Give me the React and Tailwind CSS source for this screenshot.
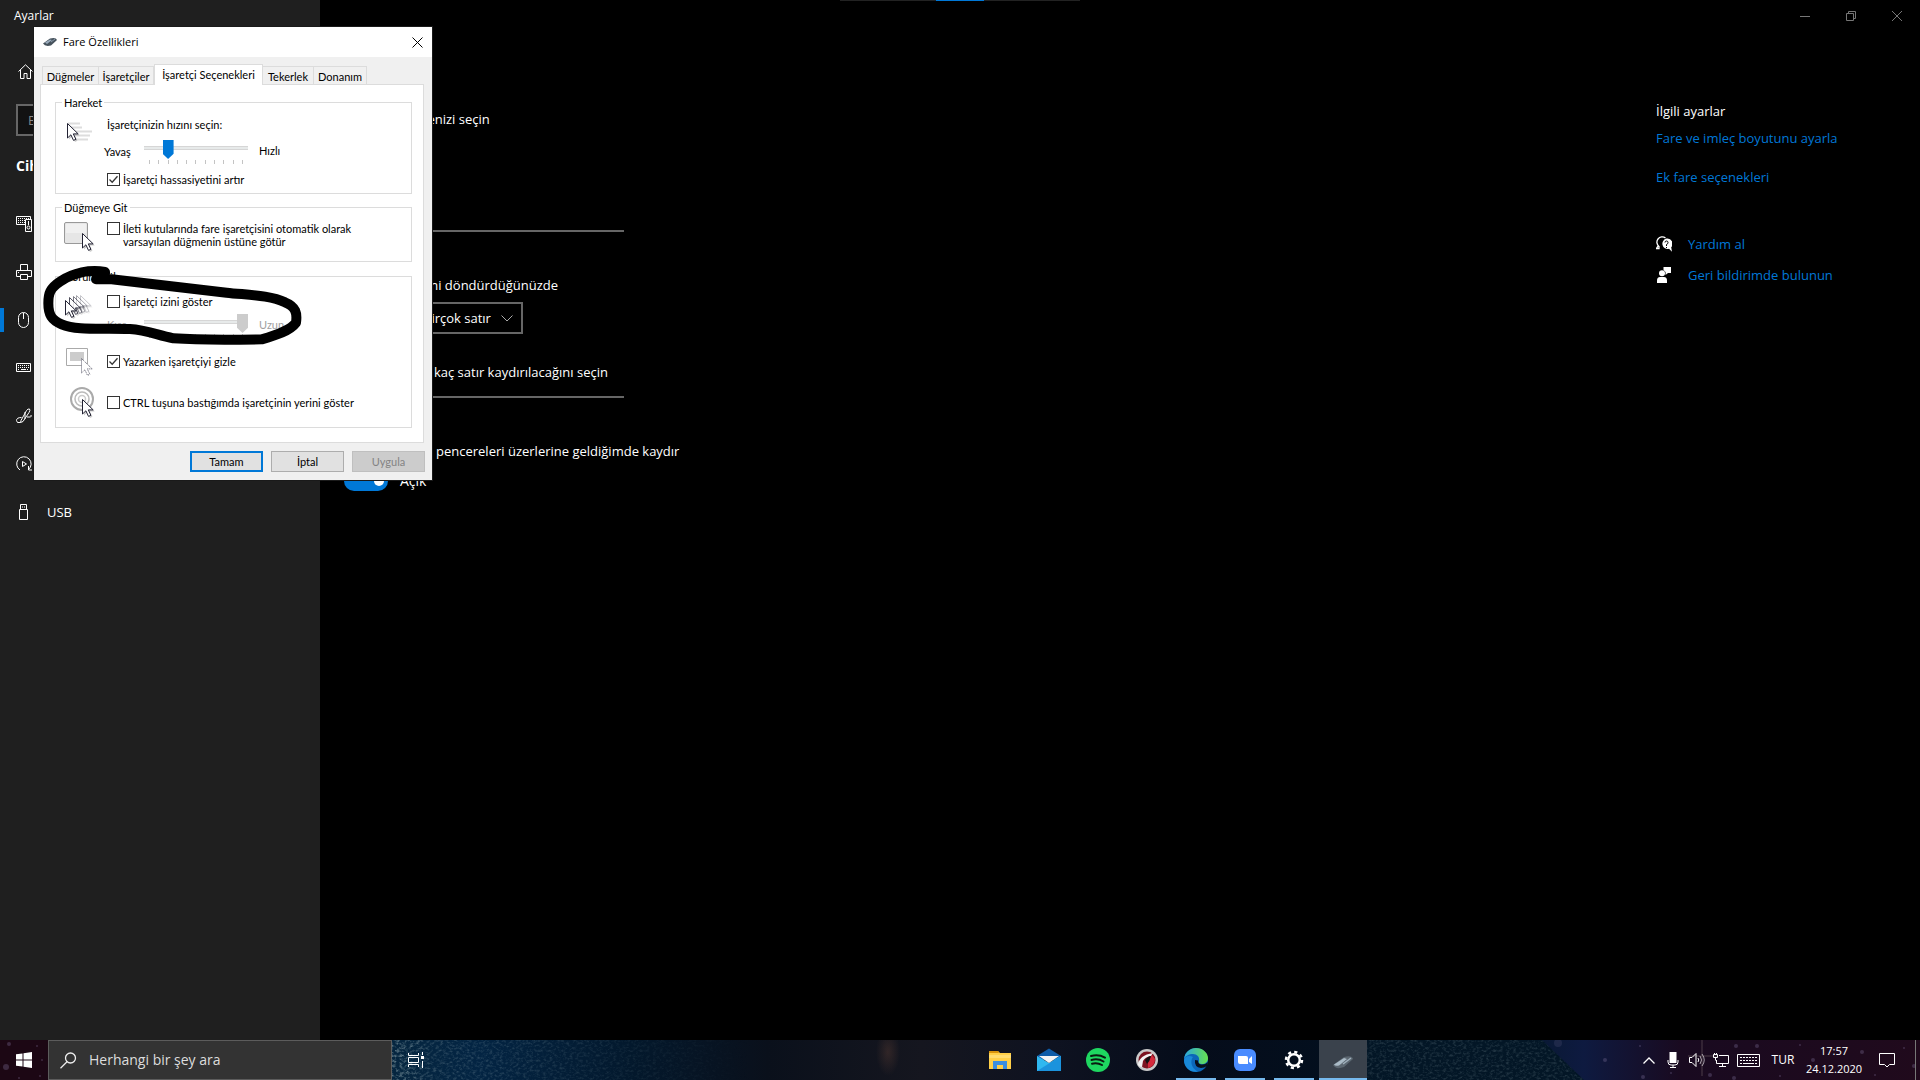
import React from 'react';

const CURSOR = "M.5.5v14.5l3.4-3.2 2.6 5.6 2.4-1.1-2.6-5.4h4.9z";

const Glyph = ({ children, className = "w-4 h-4" }) => (
    <svg viewBox="0 0 16 16" className={`shrink-0 ${className}`} fill="none" stroke="currentColor" strokeWidth="1" aria-hidden="true">
        {children}
    </svg>
);

const navItems = [
    {
        name: "Bluetooth ve diğer cihazlar",
        icon: (
            <>
                <path d="M9 8.5H.5v-8h14V3" />
                <path d="M2 2.5h11M2 4.5h7M2 6.5h7" strokeDasharray="1 1" />
                <path d="M9.500 3.500h6v12h-6z" />
                <circle cx="12.500" cy="11.500" r="1.500" />
                <path d="M12 6h1M12 8h1" strokeWidth="2" />
            </>
        ),
    },
    {
        name: "Yazıcılar ve tarayıcılar",
        icon: (
            <>
                <path d="M4.500 6.500v-6h7v6M4.500 12.500h-4v-6h15v6h-4" />
                <path d="M4.500 10.500h7v5h-7zM2 8.500h1" />
            </>
        ),
    },
    {
        name: "Fare",
        active: true,
        icon: <path d="M2.500 5.500a5 5 0 0 1 10 0v5a5 5 0 0 1-10 0zM7.500 1v6" />,
    },
    {
        name: "Yazma",
        icon: (
            <>
                <path d="M.5 3.500h14v8H.5z" />
                <path d="M2 5.500h11M2 7.500h11M2 9.500h2M11 9.500h2" strokeDasharray="1 1" />
                <path d="M5 9.500h5" />
            </>
        ),
    },
    {
        name: "Kalem ve Windows Ink",
        icon: (
            <>
                <path d="M5 12.500 10.500 2.500q1.500-2 3-1.500 1 1-.5 3.500L7 13.500l-2.500 1z" />
                <path d="M5.500 9.500Q.5 9.500.5 12.500t4 2M11 9h3.500q1-.5.5-2M9 4v7" />
            </>
        ),
    },
    {
        name: "Otomatik Kullan",
        icon: (
            <>
                <path d="M4 14A7.200 7.200 0 1 1 12.500 13.500M12.500 10v4h3.500" />
                <path d="M6.500 5.500v5l4-2.500z" />
            </>
        ),
    },
    {
        name: "USB",
        label: "USB",
        icon: (
            <>
                <path d="M3.500 5.500h8v10h-8zM4.500 5.500v-5h6v5" />
                <path d="M6 3h1M8 3h1" />
            </>
        ),
    },
];

const lineRange = "block w-[280px] h-5 appearance-none bg-transparent [&::-webkit-slider-runnable-track]:h-[2px] [&::-webkit-slider-runnable-track]:bg-[#666] [&::-webkit-slider-thumb]:appearance-none [&::-webkit-slider-thumb]:w-2 [&::-webkit-slider-thumb]:h-5 [&::-webkit-slider-thumb]:-mt-[9px] [&::-webkit-slider-thumb]:rounded [&::-webkit-slider-thumb]:bg-[#0078d7]";

const dialogRange = "block w-[104px] h-[19px] appearance-none bg-transparent [&::-webkit-slider-runnable-track]:h-[19px] [&::-webkit-slider-runnable-track]:bg-[linear-gradient(transparent_6px,#d6d6d6_6px,#d6d6d6_7px,#e7eaea_7px,#e7eaea_9px,#d6d6d6_9px,#d6d6d6_10px,transparent_10px)] [&::-webkit-slider-thumb]:appearance-none [&::-webkit-slider-thumb]:w-[11px] [&::-webkit-slider-thumb]:h-[19px] [&::-webkit-slider-thumb]:bg-[#0078d7] [&::-webkit-slider-thumb]:[clip-path:polygon(0_0,100%_0,100%_72%,50%_100%,0_72%)] disabled:[&::-webkit-slider-thumb]:bg-[#ccc]";

const Sidebar = () => (
    <aside className="w-80 shrink-0 bg-[#1f1f1f] text-white">
        <div className="h-8 pl-[14px] pt-2 text-xs leading-4">Ayarlar</div>
        <a href="#home" aria-label="Giriş" className="flex items-center h-10 mt-5 pl-[18px]">
            <Glyph>
                <path d="M.5 7.500 7.500.8l7 6.700M2.500 6v8.500h3.500v-5h3v5h3.500V6" />
            </Glyph>
        </a>
        <input
            type="text"
            aria-label="Bir ayar bulun"
            placeholder="Bir ayar"
            className="block w-[288px] h-8 mx-4 mt-3 px-[10px] border-2 border-[#666] bg-black/40 placeholder:text-[#888]"
        />
        <h2 className="mt-5 mb-6 pl-4 h-5 text-sm leading-5 font-bold">Cihazlar</h2>
        <nav>
            {navItems.map((item) => (
                <a key={item.name} href="#nav" aria-label={item.name} className="flex items-center h-12">
                    <span className={`w-1 h-6 mr-3 ${item.active ? "bg-[#0078d7]" : ""}`}></span>
                    <Glyph>{item.icon}</Glyph>
                    {item.label && <span className="ml-[15px]">{item.label}</span>}
                </a>
            ))}
        </nav>
    </aside>
);

const WindowControls = () => (
    <header className="flex justify-end h-8 text-[#777]">
        <button aria-label="Simge durumuna küçült" className="w-[46px] grid place-items-center">
            <svg className="w-[10px] h-[10px]" viewBox="0 0 10 10" stroke="currentColor"><path d="M0 5.500h10" /></svg>
        </button>
        <button aria-label="Önceki boyut" className="w-[46px] grid place-items-center">
            <svg className="w-[10px] h-[10px]" viewBox="0 0 10 10" fill="none" stroke="currentColor"><path d="M.5 2.500h7v7h-7zM2.500 2.500v-2h7v7h-2" /></svg>
        </button>
        <button aria-label="Kapat" className="w-[46px] grid place-items-center">
            <svg className="w-[10px] h-[10px]" viewBox="0 0 10 10" stroke="currentColor"><path d="m0 0 10 10M10 0 0 10" /></svg>
        </button>
    </header>
);

const MouseSettings = () => (
    <div className="pl-6 pt-[77px]">
        <label htmlFor="primary" className="block pl-1">Birincil düğmenizi seçin</label>
        <select id="primary" className="block w-20 h-8 mt-2 px-2 appearance-none border-2 border-[#666] bg-black">
            <option>Sol</option>
        </select>
        <label htmlFor="speed" className="block pl-1 mt-[26px] mb-[6px]">İmleç hızı</label>
        <input id="speed" type="range" min="0" max="20" defaultValue="3" className={lineRange} />

        <label htmlFor="wheel" className="block pl-1 mt-[34px] mb-[7px]">Fare tekerleğini döndürdüğünüzde</label>
        <div className="grid w-[179px]">
            <select id="wheel" className="[grid-area:1/1] h-8 pl-2 appearance-none border-2 border-[#666] bg-black">
                <option>Bir seferde birçok satır</option>
            </select>
            <svg viewBox="0 0 12 7" className="[grid-area:1/1] w-3 h-[7px] mr-[10px] self-center justify-self-end pointer-events-none" fill="none" stroke="#aaa">
                <path d="m.5.5 5.500 5.500L11.500.5" />
            </svg>
        </div>

        <label htmlFor="lines" className="block pl-1 mt-7 mb-[5px]">Her seferinde kaç satır kaydırılacağını seçin</label>
        <input id="lines" type="range" min="1" max="100" defaultValue="3" className={lineRange} />

        <label htmlFor="inactive" className="block mt-[34px] pl-[92px]">pencereleri üzerlerine geldiğimde kaydır</label>
        <div className="flex items-center gap-3 mt-[10px]">
            <button id="inactive" role="switch" aria-checked="true" className="flex items-center justify-end w-[44px] h-5 pr-1 rounded-full bg-[#0078d7]">
                <span className="w-[10px] h-[10px] rounded-full bg-white"></span>
            </button>
            <span className="text-sm leading-5">Açık</span>
        </div>
    </div>
);

const RelatedSettings = () => (
    <section className="w-[264px] shrink-0 pt-[69px] text-[#0078d7]">
        <h2 className="text-white mb-[7px]">İlgili ayarlar</h2>
        <a href="#cursor" className="block mb-[19px]">Fare ve imleç boyutunu ayarla</a>
        <a href="#more" className="block mb-[47px]">Ek fare seçenekleri</a>
        <a href="#help" className="flex items-center gap-4 mb-[11px]">
            <Glyph className="w-4 h-4 text-white">
                <path d="M3 10.500A5 5 0 1 1 9.500 2M3 10v2.500H.5L2 10" strokeWidth="1.300" />
                <path d="M10.500 2.500a5.300 5.300 0 1 0 2.500 10.300l3 3-.8-4.500A5.300 5.300 0 0 0 10.500 2.500z" fill="currentColor" stroke="none" />
                <path d="M9 6.500q0-1.500 1.500-1.500T12 6.500t-1.500 2V10M10.500 11v1" stroke="#000" />
            </Glyph>
            Yardım al
        </a>
        <a href="#feedback" className="flex items-center gap-4">
            <Glyph className="w-4 h-4 text-white">
                <g fill="currentColor" stroke="none">
                    <path d="M7.500 0h7.500v6H12L9.500 8V5L7.500 3z" />
                    <circle cx="6" cy="6.200" r="3" />
                    <path d="M1 16v-2.500Q1 10 4 10h4q3 0 3 3.500V16z" />
                </g>
            </Glyph>
            Geri bildirimde bulunun
        </a>
    </section>
);

const CheckBox = ({ id, label, checked }) => (
    <div className="flex items-start gap-[3px]">
        <span className="grid shrink-0">
            <input id={id} type="checkbox" defaultChecked={checked} className="peer [grid-area:1/1] w-[13px] h-[13px] appearance-none border border-[#333] bg-white" />
            <svg viewBox="0 0 13 13" className="[grid-area:1/1] w-[13px] h-[13px] hidden peer-checked:block pointer-events-none" fill="none" stroke="#333" strokeWidth="1.300">
                <path d="m2.500 6.500 2.700 2.700 5.300-6" />
            </svg>
        </span>
        <label htmlFor={id} className="whitespace-pre-line">{label}</label>
    </div>
);

const Ticks = () => (
    <div className="flex justify-between w-[94px] h-1 mx-[5px] mt-[1px]">
        {Array.from({ length: 11 }, (_, i) => (
            <span key={i} className="w-px bg-[#c4c4c4]"></span>
        ))}
    </div>
);

const Group = ({ title, className, children }) => (
    <fieldset className={`border border-[#dcdcdc] ${className}`}>
        <legend className="h-[13px] ml-[6px] px-[2px]">{title}</legend>
        {children}
    </fieldset>
);

const IconCell = ({ children }) => (
    <svg viewBox="0 0 48 34" className="w-[48px] h-[34px] shrink-0 -mb-2" fill="none" aria-hidden="true">
        {children}
    </svg>
);

const Cursor = ({ x, y, opacity = 1 }) => (
    <g transform={`translate(${x} ${y})`} opacity={opacity}>
        <path d={CURSOR} transform="translate(1.500 1.500)" fill="#999" opacity=".5" />
        <path d={CURSOR} fill="#fff" stroke="#223" />
    </g>
);

const tabs = [
    { label: "Düğmeler", width: "w-[57px]" },
    { label: "İşaretçiler", width: "w-[56px]" },
    { label: "İşaretçi Seçenekleri", width: "w-[109px]", active: true },
    { label: "Tekerlek", width: "w-[52px]" },
    { label: "Donanım", width: "w-[53px]" },
];

const MouseDialog = () => (
    <div role="dialog" aria-label="Fare Özellikleri" className="absolute left-[34px] top-[27px] w-[398px] bg-[#f0f0f0] text-black text-[11px] leading-[13px] font-['Lato','Liberation_Sans',sans-serif] shadow-[0_0_0_1px_#1a1a1a]">
        <div className="flex items-center h-[30px] pl-[9px] bg-white">
            <svg viewBox="0 0 15 10" className="w-[15px] h-[10px]">
                <path d="M0 6.500 7 1.500Q13 0 14 3L8 8.500Q2 10 0 6.500z" fill="#46525c" />
                <path d="M2 5.500 7 2.500l2 .5-5 4z" fill="#9ab" />
                <path d="m8 5 4-3" stroke="#89a" />
            </svg>
            <h2 className="flex-1 ml-[5px] pb-px text-[11px] font-['Open_Sans',sans-serif]">Fare Özellikleri</h2>
            <button aria-label="Kapat" className="grid place-items-center w-[30px] h-full">
                <svg viewBox="0 0 11 11" className="w-[11px] h-[11px]" stroke="#000"><path d="m.5.5 10 10M10.500.5l-10 10" /></svg>
            </button>
        </div>

        <div role="tablist" className="flex items-end h-[27px] pl-2">
            {tabs.map((tab) => (
                <button
                    key={tab.label}
                    role="tab"
                    aria-selected={!!tab.active}
                    className={`${tab.width} whitespace-nowrap border border-b-0 border-[#dcdcdc] ${tab.active ? "relative z-10 h-[21px] -mb-px pb-[2px] bg-white" : "h-[18px] pt-px -ml-px first:ml-0 last:w-[54px]"}`}
                >
                    {tab.label}
                </button>
            ))}
        </div>

        <div className="ml-[6px] mr-2 pt-[11px] pb-[14px] pl-[14px] pr-[11px] border border-[#dcdcdc] bg-white">
            <Group title="Hareket" className="pb-[7px]">
                <div className="flex pt-[9px]">
                    <IconCell>
                        <path d="M12 5.500h12M15 9.500h11M16 13.500h20M18 17.500h16M18 21.500h14" stroke="#ddd" strokeWidth="2" />
                        <Cursor x="11" y="5" />
                    </IconCell>
                    <div>
                        <label htmlFor="dlg-speed" className="block pl-[3px]">İşaretçinizin hızını seçin:</label>
                        <div className="flex mt-[9px]">
                            <span className="w-10 pt-[5px]">Yavaş</span>
                            <div>
                                <input id="dlg-speed" type="range" min="0" max="10" defaultValue="2" className={dialogRange} />
                                <Ticks />
                            </div>
                            <span className="pt-1 pl-[11px]">Hızlı</span>
                        </div>
                        <div className="pl-[3px] pt-[9px]">
                            <CheckBox id="precision" label="İşaretçi hassasiyetini artır" checked />
                        </div>
                    </div>
                </div>
            </Group>

            <Group title="Düğmeye Git" className="mt-[7px] pb-[13px]">
                <div className="flex pt-2">
                    <IconCell>
                        <rect x="8.500" y="0.500" width="23" height="21" rx="1.500" fill="#e6e6e6" stroke="#999" />
                        <path d="M10 2h20v9H10z" fill="#f0f0f0" />
                        <Cursor x="26" y="11" />
                    </IconCell>
                    <div className="pl-[3px]">
                        <CheckBox id="snap" label={"İleti kutularında fare işaretçisini otomatik olarak\nvarsayılan düğmenin üstüne götür"} />
                    </div>
                </div>
            </Group>

            <Group title="Görünürlük" className="mt-2 pb-2">
                <div className="flex h-[54px] mt-[10px]">
                    <IconCell>
                        <Cursor x="24" y="2" opacity=".25" />
                        <Cursor x="20" y="2" opacity=".4" />
                        <Cursor x="17" y="3" opacity=".6" />
                        <Cursor x="13" y="4" opacity=".8" />
                        <Cursor x="9" y="7" />
                    </IconCell>
                    <div className="pt-[2px]">
                        <div className="pl-[3px]">
                            <CheckBox id="trail" label="İşaretçi izini göster" />
                        </div>
                        <div className="flex mt-[6px] text-[#a0a0a0]">
                            <span className="w-10 pl-[3px] pt-1">Kısa</span>
                            <div>
                                <input type="range" aria-label="İz uzunluğu" min="0" max="10" defaultValue="10" disabled className={dialogRange} />
                                <Ticks />
                            </div>
                            <span className="pt-1 pl-[11px]">Uzun</span>
                        </div>
                    </div>
                </div>
                <div className="flex h-[39px]">
                    <IconCell>
                        <path d="M10.500 1.500h21v17h-21z" stroke="#aaa" fill="#fff" />
                        <path d="M14 5h14v9H14z" fill="#ccc" />
                        <path d={CURSOR} transform="translate(25 11)" fill="#fff" stroke="#556" strokeDasharray="1 1" />
                    </IconCell>
                    <div className="pl-[3px] pt-2">
                        <CheckBox id="hide" label="Yazarken işaretçiyi gizle" checked />
                    </div>
                </div>
                <div className="flex h-[33px]">
                    <IconCell>
                        <circle cx="26" cy="13" r="11" stroke="#aaa" strokeWidth="2" />
                        <circle cx="26" cy="13" r="7" stroke="#bbb" strokeWidth="1.500" />
                        <circle cx="26" cy="13" r="3.500" stroke="#ccc" strokeWidth="1.500" />
                        <Cursor x="26" y="13" />
                    </IconCell>
                    <div className="pl-[3px] pt-[10px]">
                        <CheckBox id="ctrl" label="CTRL tuşuna bastığımda işaretçinin yerini göster" />
                    </div>
                </div>
            </Group>
        </div>

        <div className="flex justify-end gap-2 pt-2 pb-2 pr-[7px]">
            <button className="w-[73px] h-[21px] border-2 border-[#0078d7] bg-[#e1e1e1]">Tamam</button>
            <button className="w-[73px] h-[21px] border border-[#adadad] bg-[#e1e1e1]">İptal</button>
            <button disabled className="w-[73px] h-[21px] border border-[#bfbfbf] bg-[#ccc] text-[#838383]">Uygula</button>
        </div>
    </div>
);

/* hand-drawn loop around the pointer trail option */
const Scribble = () => (
    <svg viewBox="0 0 810 270" className="absolute left-[40px] top-[260px] w-[270px] h-[90px] pointer-events-none" fill="none" stroke="#000" strokeWidth="30" strokeLinecap="round" strokeLinejoin="round">
        <path d="M195 36C150 28 100 38 60 65C30 85 25 100 25 130C25 165 35 180 65 193C110 212 180 204 270 207C320 210 350 225 400 235C470 240 560 240 665 238C710 225 750 212 768 188C772 160 768 140 735 127C690 105 620 105 560 98C450 85 330 72 215 58L168 58L195 38" />
    </svg>
);

const Wallpaper = () => (
    <svg className="absolute inset-0 w-full h-full" preserveAspectRatio="none" viewBox="0 0 1920 40" aria-hidden="true">
        <defs>
            <linearGradient id="sky">
                <stop offset="0" stopColor="#1c0714" />
                <stop offset=".04" stopColor="#1c0714" />
                <stop offset=".2" stopColor="#06263f" />
                <stop offset=".25" stopColor="#032443" />
                <stop offset=".33" stopColor="#03182c" />
                <stop offset=".4" stopColor="#0a101b" />
                <stop offset=".48" stopColor="#15161f" />
                <stop offset=".55" stopColor="#0e1220" />
                <stop offset=".62" stopColor="#050c1a" />
                <stop offset=".72" stopColor="#02101f" />
                <stop offset=".79" stopColor="#07182e" />
                <stop offset=".825" stopColor="#0e1a40" />
                <stop offset=".875" stopColor="#190a20" />
                <stop offset="1" stopColor="#200a1c" />
            </linearGradient>
            <linearGradient id="fade">
                <stop offset="0" stopColor="#fff" />
                <stop offset=".1" stopColor="#fff" stopOpacity=".4" />
                <stop offset="1" stopColor="#fff" stopOpacity="0" />
            </linearGradient>
            <radialGradient id="flare">
                <stop offset="0" stopColor="#6b4638" stopOpacity=".35" />
                <stop offset="1" stopColor="#6b4638" stopOpacity="0" />
            </radialGradient>
            <mask id="left"><rect x="392" width="360" height="40" fill="url(#fade)" /></mask>
            <clipPath id="ridge"><path d="M1367 0h175l42 40h-217z" /></clipPath>
            <filter id="grain" x="0" y="0" width="100%" height="100%">
                <feTurbulence type="fractalNoise" baseFrequency=".3 .4" numOctaves="3" />
                <feColorMatrix values="0 0 0 0 .32  0 0 0 0 .43  0 0 0 0 .46  0 2.500 0 0 -1.100" />
            </filter>
        </defs>
        <rect width="1920" height="40" fill="url(#sky)" />
        <g mask="url(#left)"><rect x="392" width="400" height="40" filter="url(#grain)" opacity=".7" /></g>
        <g clipPath="url(#ridge)">
            <rect x="1367" width="220" height="40" fill="#031626" />
            <rect x="1367" width="220" height="40" filter="url(#grain)" opacity=".2" />
        </g>
        <ellipse cx="888" cy="12" rx="12" ry="24" fill="url(#flare)" />
        <g fill="#8a7ba8" opacity=".3">
            <circle cx="9" cy="4" r="2" /><circle cx="6" cy="27" r="3" /><circle cx="37" cy="6" r="1" /><circle cx="42" cy="20" r="1" />
            <circle cx="40" cy="36" r="1" /><circle cx="19" cy="38" r="1" /><circle cx="1605" cy="20" r="2" /><circle cx="1640" cy="6" r="1" />
            <circle cx="1671" cy="33" r="1" /><circle cx="1710" cy="35" r="2" /><circle cx="1736" cy="6" r="2" /><circle cx="1757" cy="6" r="2" />
            <circle cx="1780" cy="36" r="1" /><circle cx="1800" cy="5" r="1" /><circle cx="1813" cy="20" r="2" /><circle cx="1862" cy="12" r="2" />
            <circle cx="1875" cy="35" r="1" /><circle cx="1904" cy="8" r="1" /><circle cx="1914" cy="26" r="2" /><circle cx="1734" cy="38" r="2" />
            <circle cx="1558" cy="3" r="4" opacity=".5" /><circle cx="1643" cy="37" r="2" />
        </g>
        <path d="M1702 0v36M1688 16h30" stroke="#a99a92" opacity=".35" />
    </svg>
);

const apps = [
    {
        name: "Dosya Gezgini",
        icon: (
            <>
                <path d="M1 3h9l2 2h11v16H1z" fill="#ffcf48" />
                <path d="M1 3h9l1 2H1z" fill="#d9940c" />
                <path d="M1 7h22v3H1z" fill="#ffdc70" />
                <path d="M5 21v-8h14v8h-4v-4H9v4z" fill="#3b8ee0" />
            </>
        ),
    },
    {
        name: "Posta",
        icon: (
            <>
                <path d="M0 8 12 .5 24 8v4H0z" fill="#0f5ca8" />
                <path d="M0 8l12 7L24 8v15H0z" fill="#2fb8f0" />
                <path d="M0 23 24 8v15z" fill="#1b93dd" />
                <path d="M2 8h20l-10 7z" fill="#f4f4f4" />
            </>
        ),
    },
    {
        name: "Spotify",
        icon: (
            <>
                <circle cx="12" cy="12" r="12" fill="#1ed760" />
                <path d="M5 8q7.500-2 14 1.600M5.500 12q6.500-1.800 12 1.500M6 15.700q5.500-1.300 10 1.300" fill="none" stroke="#0a1a10" strokeWidth="2" strokeLinecap="round" />
            </>
        ),
    },
    {
        name: "Comodo Dragon",
        icon: (
            <>
                <circle cx="12" cy="12" r="11" fill="#c9c9c9" />
                <circle cx="12" cy="12" r="8.500" fill="#7d1420" />
                <path d="M13 20q7-2 7-9l-3-4-4 6z" fill="#d52a3c" />
                <path d="M3 17Q4 7 18 5l-2 3q-6 1-8 5l-1 6q-3 0-4-2z" fill="#f2f2f2" />
                <path d="M10 12q3-4 6-4-1 5-4 8z" fill="#111" />
            </>
        ),
    },
    {
        name: "Microsoft Edge",
        running: true,
        icon: (
            <>
                <defs>
                    <linearGradient id="edge" x1="0" x2="1"><stop offset="0" stopColor="#2aa5e0" /><stop offset="1" stopColor="#66e04e" /></linearGradient>
                </defs>
                <circle cx="12" cy="12" r="12" fill="#0c66b8" />
                <path d="M0 11C1 4 6 0 12 0c7 0 12 5 12 10 0 4-3 6-6 6-3 0-4-1-3-3 1-4-2-7-6-7-4 0-8 2-9 5z" fill="url(#edge)" />
                <path d="M9 9c-3 4-2 11 5 14.500C7 25 0 20 0 12c1-4 5-5 9-3z" fill="#1989d8" />
                <path d="M11 12q-1 7 6 8 3 0 6-2l1-4q-3 3-7 2.500-3-.5-3-4z" fill="#08101c" />
            </>
        ),
    },
    {
        name: "Zoom",
        running: true,
        icon: (
            <>
                <rect x="1" y="1" width="22" height="22" rx="6" fill="#4a8cff" />
                <path d="M5 8h8q2 0 2 2v6H7q-2 0-2-2zM16 11l3-3v8l-3-2z" fill="#fff" />
            </>
        ),
    },
    {
        name: "Ayarlar",
        running: true,
        icon: (
            <>
                <circle cx="12" cy="12" r="5.800" fill="none" stroke="#fff" strokeWidth="2.500" />
                <circle cx="12" cy="12" r="8" fill="none" stroke="#fff" strokeWidth="2.500" strokeDasharray="3.140 3.140" />
            </>
        ),
    },
    {
        name: "Fare Özellikleri",
        active: true,
        icon: (
            <>
                <path d="M2 17 13 9q8-2 9 2l-9 8q-8 3-11-2z" fill="#5b6670" />
                <path d="M3 16.500 13 10l3 1-8 6.500q-4 1-5-1z" fill="#a9bac6" />
                <path d="m12 16 8-6" stroke="#9fb0bc" strokeWidth="1.500" />
            </>
        ),
    },
];

const Taskbar = () => (
    <footer className="relative h-10 shrink-0 text-white">
        <Wallpaper />
        <div className="relative flex h-full">
            <button aria-label="Başlat" className="w-12 grid place-items-center">
                <svg viewBox="0 0 16 16" className="w-4 h-4" fill="#fff">
                    <path d="M0 2.300 6.500 1.400v6.100H0zM7.500 1.200 16 0v7.500H7.500zM0 8.500h6.500v6.100L0 13.700zM7.500 8.500H16V16l-8.500-1.200z" />
                </svg>
            </button>
            <label className="flex items-center w-[344px] pl-[11px] gap-3 border border-[#5c5c5c] bg-[#333]">
                <svg viewBox="0 0 17 17" className="w-[17px] h-[17px] shrink-0" fill="none" stroke="#eee" strokeWidth="1.300">
                    <circle cx="10.500" cy="6" r="5" />
                    <path d="M7 9.800.5 16.300" />
                </svg>
                <input type="text" aria-label="Arama" placeholder="Herhangi bir şey ara" className="flex-1 min-w-0 bg-transparent text-sm placeholder:text-[#ddd]" />
            </label>
            <button aria-label="Görev görünümü" className="w-12 grid place-items-center">
                <Glyph>
                    <path d="M.5 1v2.500h10V1M.5 15v-2.500h10V15M.5 5.500h10v5H.5zM14.500 0v3M14.500 9v7" />
                    <path d="M13 4h3v3h-3z" fill="currentColor" stroke="none" />
                </Glyph>
            </button>
            <div className="flex-[2]"></div>
            <div className="flex gap-[1px] mr-[2px]">
                {apps.map((app) => (
                    <button key={app.name} aria-label={app.name} className={`flex flex-col items-center justify-between w-12 h-full pt-2 ${app.active ? "bg-[#3a424c]" : ""}`}>
                        <svg viewBox="0 0 24 24" className="w-6 h-6">{app.icon}</svg>
                        <span className={`h-[2px] ${app.active ? "w-full bg-[#76b9ed]" : app.running ? "w-10 bg-[#76b9ed]" : ""}`}></span>
                    </button>
                ))}
            </div>
            <div className="flex-1"></div>
            <div className="flex items-center">
                <button aria-label="Gizli simgeleri göster" className="w-6 grid place-items-center">
                    <svg viewBox="0 0 12 7" className="w-3 h-[7px]" fill="none" stroke="#fff" strokeWidth="1.300"><path d="m.5 6.500 5.500-5.500L11.500 6.500" /></svg>
                </button>
                <button aria-label="Mikrofon" className="w-6 grid place-items-center">
                    <Glyph>
                        <path d="M4.500 0h7v11h-7z" fill="currentColor" stroke="none" />
                        <path d="M3 8v2q0 3 3 3h4q3 0 3-3V8M8 13v2.500M5 15.500h6" />
                    </Glyph>
                </button>
                <button aria-label="Ses" className="w-6 grid place-items-center">
                    <Glyph>
                        <path d="M.5 5.500H3l4-4v13l-4-4H.5zM9 6q1.500 2 0 4" />
                        <path d="M11 4q3 4 0 8M13 2q4.500 6 0 12" opacity=".6" />
                    </Glyph>
                </button>
                <button aria-label="Ağ" className="w-6 grid place-items-center">
                    <Glyph>
                        <path d="M6 3.500h9.500v8H3.500V8M9.500 11.500v3M6 14.500h7M.5 2.500h4v3h-4zM1.500 1v1M3.500 1v1M2.500 5.500v3" />
                    </Glyph>
                </button>
                <button aria-label="Dokunmatik klavye" className="w-[30px] grid place-items-center">
                    <svg viewBox="0 0 23 13" className="w-[23px] h-[13px]" fill="none" stroke="#fff">
                        <path d="M.5.5h22v12H.5z" />
                        <path d="M3 3.500h17M3 6.500h17M3 9.500h2M18 9.500h2" strokeDasharray="2 1" />
                        <path d="M6 9.500h11" />
                    </svg>
                </button>
                <button className="w-10 text-xs">TUR</button>
                <button className="w-[62px] text-[11px] leading-[18px]">17:57<br />24.12.2020</button>
                <button aria-label="Bildirimler" className="w-11 grid place-items-center">
                    <Glyph>
                        <path d="M.5 1.500h15v11h-5L8 15l-2.500-2.500h-5z" />
                    </Glyph>
                </button>
                <span className="w-[5px] h-10 ml-[6px] border-l border-[#777]"></span>
            </div>
        </div>
    </footer>
);

const App = () => (
    <div className="relative flex flex-col h-screen overflow-hidden bg-black text-white text-[13px] leading-5 font-['Open_Sans','Noto_Sans',sans-serif]">
        <div className="flex flex-1 min-h-0">
            <Sidebar />
            <main className="flex-1 bg-black">
                <WindowControls />
                <div className="flex justify-between">
                    <MouseSettings />
                    <RelatedSettings />
                </div>
            </main>
        </div>
        <Taskbar />

        <div className="absolute top-0 inset-x-0 flex justify-center">
            <div className="flex justify-center w-60 h-px bg-[#222]">
                <span className="w-12 bg-[#0078d7]"></span>
            </div>
        </div>
        <MouseDialog />
        <Scribble />
    </div>
);

export default App;
